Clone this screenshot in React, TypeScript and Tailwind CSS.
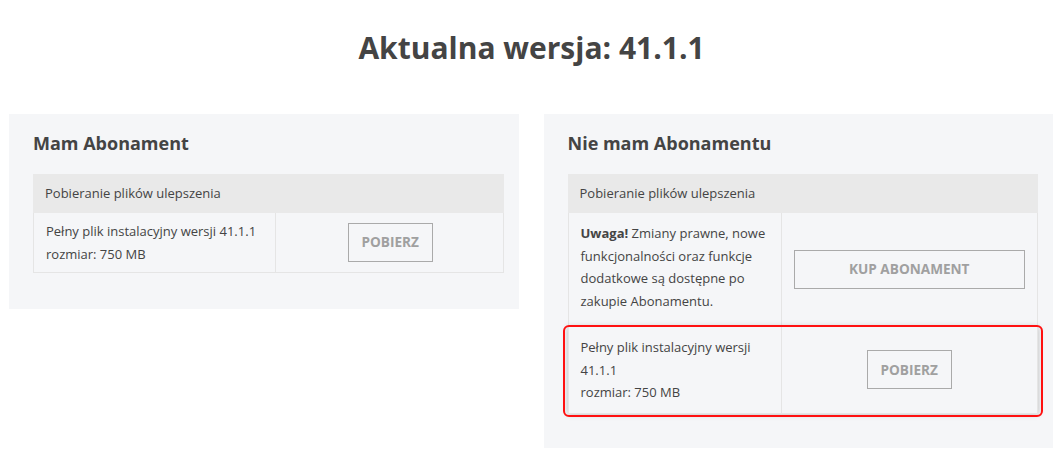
import React from "react";

const font = { fontFamily: '"Open Sans", "Liberation Sans", sans-serif' };

function Btn({ children, wide }: { children: React.ReactNode; wide?: boolean }) {
  return (
    <button
      className={
        "h-[39px] border border-[#aaaaaa] bg-transparent text-[13.6px] font-bold uppercase text-[#a0a0a0] " +
        (wide ? "w-full" : "w-[85px]")
      }
    >
      {children}
    </button>
  );
}

export default function App() {
  return (
    <div className="min-h-[463px] w-[1063px] bg-white text-[#444444]" style={font}>
      <h1 className="pt-[26px] text-center text-[30px] font-bold leading-[44px] text-[#444444]">
        Aktualna wersja: 41.1.1
      </h1>
      <div className="mt-[44px] flex items-start gap-[25px] pl-[9px] pr-[10px]">
        {/* Left panel */}
        <div className="flex-1 bg-[#f5f6f8] pl-[24px] pr-[15px] pb-[36px]">
          <h2 className="pt-[17px] text-[18px] font-bold leading-[24px] text-[#444444]">Mam Abonament</h2>
          <div className="mt-[19px] text-[13px] leading-[22.5px]">
            <div className="bg-[#e9e9e9] px-[12px] py-[8px] leading-[23px]">Pobieranie plików ulepszenia</div>
            <div className="flex border-x border-b border-[#e5e5e5]">
              <div className="w-[242px] border-r border-[#e5e5e5] px-[12px] py-[7px]">
                <div>Pełny plik instalacyjny wersji 41.1.1</div>
                <div>rozmiar: 750 MB</div>
              </div>
              <div className="flex flex-1 items-center justify-center pl-[2px]">
                <Btn>Pobierz</Btn>
              </div>
            </div>
          </div>
        </div>
        {/* Right panel */}
        <div className="flex-1 bg-[#f5f6f8] pl-[24px] pr-[15px] pb-[34px]">
          <h2 className="pt-[17px] text-[18px] font-bold leading-[24px] text-[#444444]">Nie mam Abonamentu</h2>
          <div className="mt-[19px] text-[13px] leading-[22.5px]">
            <div className="bg-[#e9e9e9] px-[12px] py-[8px] leading-[23px]">Pobieranie plików ulepszenia</div>
            <div className="flex border-x border-b border-[#e5e5e5]">
              <div className="w-[213px] border-r border-[#e5e5e5] px-[12px] pt-[9px] pb-[14px]">
                <p>
                  <b className="font-bold">Uwaga!</b> Zmiany prawne, nowe funkcjonalności oraz funkcje dodatkowe są
                  dostępne po zakupie Abonamentu.
                </p>
              </div>
              <div className="flex flex-1 items-center px-[12px]">
                <Btn wide>Kup abonament</Btn>
              </div>
            </div>
            <div className="relative flex border-x border-b border-[#e5e5e5] shadow-[0_0_6px_rgba(0,0,0,0.25)]">
              <div className="w-[213px] border-r border-[#e5e5e5] px-[12px] py-[9px]">
                <div>Pełny plik instalacyjny wersji</div>
                <div>41.1.1</div>
                <div>rozmiar: 750 MB</div>
              </div>
              <div className="flex flex-1 items-center justify-center">
                <Btn>Pobierz</Btn>
              </div>
              <div className="pointer-events-none absolute -top-[2px] -bottom-[4px] -left-[6px] -right-[6px] rounded-[6px] border-2 border-[#ff1010]" />
            </div>
          </div>
        </div>
      </div>
    </div>
  );
}
